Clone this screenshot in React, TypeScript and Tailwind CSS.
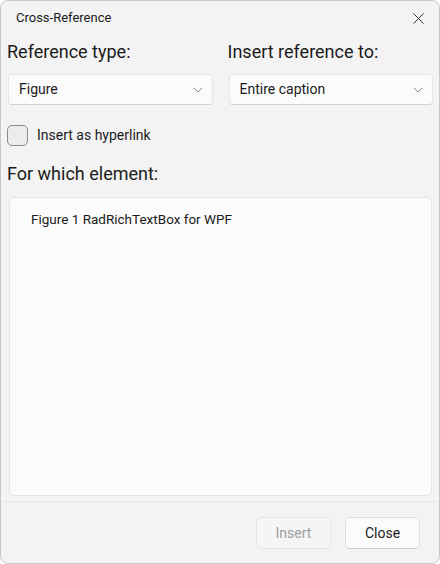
import React from "react";

const font = { fontFamily: '"Segoe UI", Roboto, "Noto Sans", sans-serif' };

function Chevron() {
  return (
    <svg width="10" height="6" viewBox="0 0 10 6" className="shrink-0">
      <path d="M1 1 L5 5 L9 1" fill="none" stroke="#8a8a8a" strokeWidth="1" />
    </svg>
  );
}

function Combo({ text }: { text: string }) {
  return (
    <div className="flex h-[31px] items-center justify-between rounded-[4px] border border-[#e5e5e5] border-b-[#d0d0d0] bg-[#fbfbfb] pl-[10px] pr-[9px] text-[14px] text-[#1b1b1b]">
      <span>{text}</span>
      <Chevron />
    </div>
  );
}

export default function App() {
  return (
    <div className="h-[564px] w-[440px] bg-white" style={font}>
      <div className="flex h-full w-full flex-col overflow-hidden rounded-[8px] border border-[#c8c8c8] bg-[#f3f3f3]">
        <div className="flex h-[34px] shrink-0 items-center justify-between pl-[15px] pr-[15px]">
          <span className="text-[13px] text-[#1b1b1b]">Cross-Reference</span>
          <svg width="11" height="11" viewBox="0 0 11 11">
            <path d="M0.5 0.5 L10.5 10.5 M10.5 0.5 L0.5 10.5" stroke="#333" strokeWidth="1" />
          </svg>
        </div>
        <div className="grid grid-cols-2 gap-x-[15px] pl-[6px] pr-[6px]">
          <div className="flex flex-col">
            <div className="h-[39px] pt-[5px] text-[18px] leading-[24px] text-[#1b1b1b]">Reference type:</div>
            <div className="pl-[1px]">
              <Combo text="Figure" />
            </div>
          </div>
          <div className="flex flex-col">
            <div className="h-[39px] pt-[5px] text-[18px] leading-[24px] text-[#1b1b1b]">Insert reference to:</div>
            <div className="pl-[1px]">
              <Combo text="Entire caption" />
            </div>
          </div>
        </div>
        <div className="mt-[20px] flex items-center pl-[6px]">
          <div className="h-[21px] w-[21px] rounded-[5px] border border-[#8a8a8a] bg-[#ececec]" />
          <span className="ml-[9px] text-[14px] text-[#1b1b1b]">Insert as hyperlink</span>
        </div>
        <div className="mt-[16px] pl-[6px] text-[18px] leading-[24px] text-[#1b1b1b]">For which element:</div>
        <div className="ml-[8px] mr-[7px] mt-[11px] h-[299px] rounded-[5px] border border-[#e5e5e5] bg-[#fbfbfb] pl-[21px] pt-[11px]">
          <div className="text-[13.5px] leading-[20px] text-[#1b1b1b]">Figure 1 RadRichTextBox for WPF</div>
        </div>
        <div className="mt-[5px] flex flex-1 items-start justify-end gap-[14px] border-t border-[#e8e8e8] pr-[19px] pt-[15px]">
          <div className="flex h-[32px] w-[75px] items-center justify-center rounded-[5px] border border-[#e5e5e5] bg-[#f5f5f5] text-[14px] text-[#9d9d9d]">
            Insert
          </div>
          <div className="flex h-[32px] w-[75px] items-center justify-center rounded-[5px] border border-[#e0e0e0] border-b-[#cfcfcf] bg-[#fbfbfb] text-[14px] text-[#1b1b1b]">
            Close
          </div>
        </div>
      </div>
    </div>
  );
}
